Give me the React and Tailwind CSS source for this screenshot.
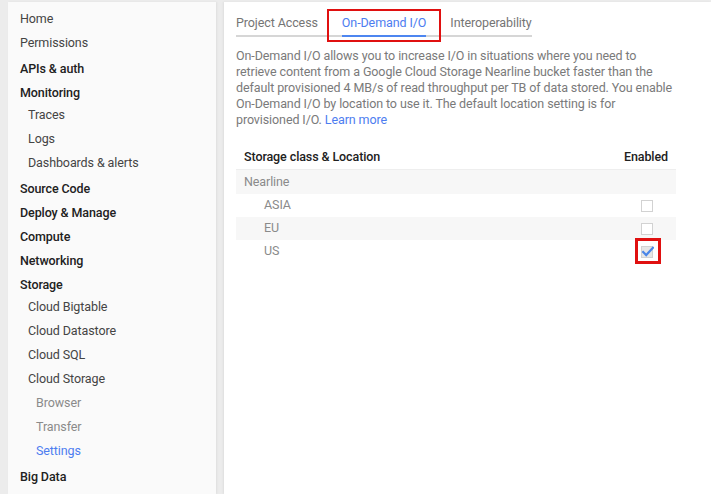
const navItems = [
  { label: "Home", level: 0 },
  { label: "Permissions", level: 0 },
  { label: "APIs & auth", level: 0, bold: true },
  { label: "Monitoring", level: 0, bold: true },
  { label: "Traces", level: 1 },
  { label: "Logs", level: 1 },
  { label: "Dashboards & alerts", level: 1 },
  { label: "Source Code", level: 0, bold: true },
  { label: "Deploy & Manage", level: 0, bold: true },
  { label: "Compute", level: 0, bold: true },
  { label: "Networking", level: 0, bold: true },
  { label: "Storage", level: 0, bold: true },
  { label: "Cloud Bigtable", level: 1 },
  { label: "Cloud Datastore", level: 1 },
  { label: "Cloud SQL", level: 1 },
  { label: "Cloud Storage", level: 1 },
  { label: "Browser", level: 2 },
  { label: "Transfer", level: 2 },
  { label: "Settings", level: 2, active: true },
  { label: "Big Data", level: 0, bold: true },
];

const locations = [
  { name: "ASIA", checked: false },
  { name: "EU", checked: false },
  { name: "US", checked: true },
];

function NavItem({ item }) {
  const indent =
    item.level === 2 ? "pl-[28px]" : item.level === 1 ? "pl-[20px]" : "pl-[12px]";
  let tone = "text-[#444] pb-[2px]";
  if (item.bold) tone = "text-[#212121] font-medium pt-[2px]";
  if (item.level === 2) tone = "text-[#8a8a8a] pb-[2px]";
  if (item.active) tone = "text-[#4d7df0] pb-[2px]";
  return (
    <div className={`h-6 flex items-center whitespace-nowrap ${indent} ${tone}`}>
      {item.label}
    </div>
  );
}

export default function App() {
  return (
    <div
      className="h-[494px] overflow-hidden bg-[#ececec] flex gap-2 pl-2 pt-[2px] text-[12.5px] tracking-[-0.1px]"
      style={{ fontFamily: "Roboto, 'Liberation Sans', sans-serif" }}
    >
      {/* Sidebar */}
      <nav className="w-[208px] shrink-0 bg-[#fafafa] pt-[6px] shadow-[1px_0_2px_rgba(0,0,0,0.06)]">
        {navItems.map((item) => (
          <NavItem key={item.label} item={item} />
        ))}
      </nav>

      {/* Main panel */}
      <main className="flex-1 bg-white pl-3 pt-[11px] shadow-[-1px_0_2px_rgba(0,0,0,0.06)]">
        <div className="inline-flex gap-6 border-b-2 border-[#d6d6d6] text-[#757575] leading-[20px]">
          <div className="pb-[2px]">Project Access</div>
          <div className="relative pb-[2px] -mb-[2px] border-b-2 border-[#4d86f0] text-[#4d7df0]">
            On-Demand I/O
            <div className="absolute -left-[15px] -right-[15px] -top-[4px] -bottom-[7px] border-2 border-[#e01010]" />
          </div>
          <div className="pb-[2px]">Interoperability</div>
        </div>

        <p className="w-[442px] mt-[11px] leading-4 text-[#7a7a7a]">
          On-Demand I/O allows you to increase I/O in situations where you need to
          retrieve content from a Google Cloud Storage Nearline bucket faster than
          the default provisioned 4 MB/s of read throughput per TB of data stored.
          You enable On-Demand I/O by location to use it. The default location
          setting is for provisioned I/O.{" "}
          <span className="text-[#4d7df0]">Learn more</span>
        </p>

        <div className="w-[440px] mt-[18px]">
          <div className="h-[24px] flex items-center justify-between px-2 border-b border-[#eeeeee] text-[#212121] font-medium">
            <span>Storage class &amp; Location</span>
            <span>Enabled</span>
          </div>
          <div className="h-[24px] flex items-center px-2 bg-[#f7f7f7] text-[#8a8a8a]">
            Nearline
          </div>
          {locations.map((loc, i) => (
            <div
              key={loc.name}
              className={`h-[23px] flex items-center justify-between pl-7 pr-[23px] text-[#8a8a8a] ${
                i % 2 === 1 ? "bg-[#f7f7f7]" : "bg-white"
              }`}
            >
              <span>{loc.name}</span>
              {loc.checked ? (
                <div className="relative w-3 h-3 border border-[#d2d2d2] bg-[#e6e6e6] mt-[1px]">
                  <svg
                    viewBox="0 0 12 12"
                    className="absolute -left-[1px] -top-[2px] w-[13px] h-[13px]"
                    fill="none"
                    stroke="#4a86e8"
                    strokeWidth="2"
                    strokeLinecap="square"
                  >
                    <path d="M2 6.5l2.8 2.8L11 2.5" />
                  </svg>
                  <div className="absolute -left-[7px] -right-[9px] -top-[9px] -bottom-[7px] border-[3px] border-[#e01010]" />
                </div>
              ) : (
                <div className="w-3 h-3 border border-[#d2d2d2] bg-white mt-[1px]" />
              )}
            </div>
          ))}
        </div>
      </main>
    </div>
  );
}
